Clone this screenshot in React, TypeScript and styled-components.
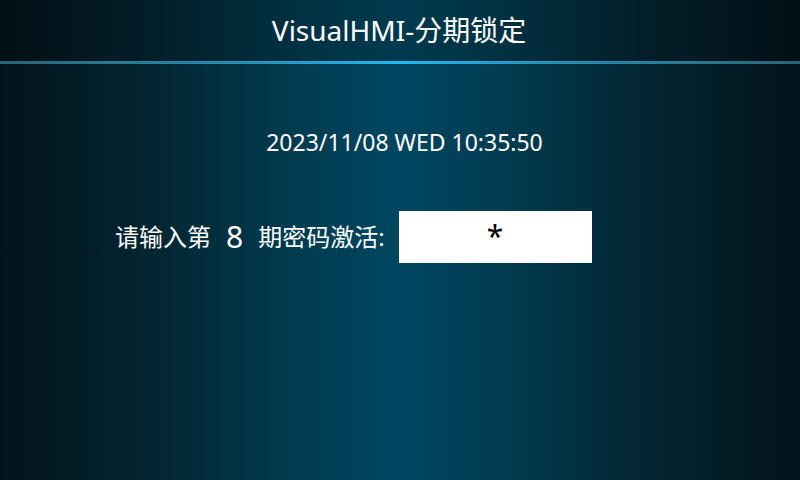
import React from 'react';
import styled, { createGlobalStyle } from 'styled-components';

const GlobalStyle = createGlobalStyle`
    html, body {
        margin: 0;
        padding: 0;
        width: 800px;
        height: 480px;
        overflow: hidden;
        background: #03161e;
    }
`;

const Screen = styled.div`
    width: 800px;
    height: 480px;
    display: flex;
    flex-direction: column;
    font-family: "Noto Sans", "Noto Sans CJK SC", sans-serif;
    color: #ffffff;
    background:
        linear-gradient(90deg, #02141b 0%, #032633 20%, #013d52 38%, #004660 50%, #013d52 62%, #032633 80%, #02141b 100%);
`;

const Header = styled.div`
    height: 61px;
    display: flex;
    align-items: center;
    justify-content: center;
    background: linear-gradient(90deg, rgba(0,0,0,0.2) 0%, rgba(0,0,0,0.18) 50%, rgba(0,0,0,0.2) 100%);
`;

const Title = styled.div`
    font-size: 28px;
    padding-bottom: 3px;
    padding-right: 2px;
`;

const Divider = styled.div`
    height: 3px;
    background: linear-gradient(90deg, #2a6479 0%, #2a8db4 30%, #22b8f0 50%, #2a8db4 70%, #2a6479 100%);
`;

const Body = styled.div`
    flex: 1;
    display: flex;
    flex-direction: column;
`;

const DateLine = styled.div`
    margin-top: 63px;
    text-align: center;
    font-size: 23px;
    line-height: 30px;
    padding-left: 9px;
`;

const Row = styled.div`
    margin-top: 54px;
    padding-left: 115px;
    display: flex;
    align-items: center;
`;

const Label = styled.span`
    font-size: 24px;
    line-height: 30px;
`;

const Stage = styled.span`
    font-size: 30px;
    line-height: 30px;
    margin: 0 15px 0 15px;
`;

const CodeBox = styled.div`
    width: 193px;
    height: 52px;
    margin-left: 14px;
    background: #ffffff;
    color: #000000;
    display: flex;
    align-items: center;
    justify-content: center;
    font-size: 30px;
    padding-bottom: 4px;
    box-sizing: border-box;
`;

const App = () => {
    return (
        <>
            <GlobalStyle />
            <Screen>
                <Header>
                    <Title>VisualHMI-分期锁定</Title>
                </Header>
                <Divider />
                <Body>
                    <DateLine>2023/11/08 WED 10:35:50</DateLine>
                    <Row>
                        <Label>请输入第</Label>
                        <Stage>8</Stage>
                        <Label>期密码激活:</Label>
                        <CodeBox>*</CodeBox>
                    </Row>
                </Body>
            </Screen>
        </>
    );
};

export default App;
